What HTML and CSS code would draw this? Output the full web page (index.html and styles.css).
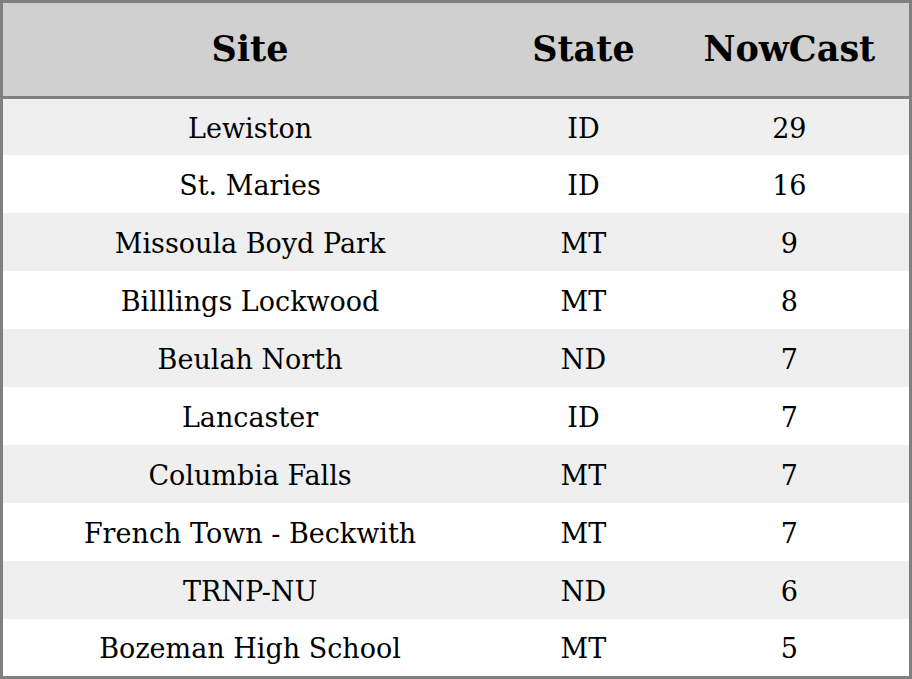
FILE: index.html
```html
<!DOCTYPE html>
<html>
<head>
<meta charset="utf-8">
<link rel="stylesheet" href="styles.css">
</head>
<body>
<table class="tbl">
  <colgroup>
    <col class="c-site">
    <col class="c-state">
    <col class="c-now">
  </colgroup>
  <thead>
    <tr><th>Site</th><th>State</th><th>NowCast</th></tr>
  </thead>
  <tbody>
    <tr><td>Lewiston</td><td>ID</td><td>29</td></tr>
    <tr><td>St. Maries</td><td>ID</td><td>16</td></tr>
    <tr><td>Missoula Boyd Park</td><td>MT</td><td>9</td></tr>
    <tr><td>Billlings Lockwood</td><td>MT</td><td>8</td></tr>
    <tr><td>Beulah North</td><td>ND</td><td>7</td></tr>
    <tr><td>Lancaster</td><td>ID</td><td>7</td></tr>
    <tr><td>Columbia Falls</td><td>MT</td><td>7</td></tr>
    <tr><td>French Town - Beckwith</td><td>MT</td><td>7</td></tr>
    <tr><td>TRNP-NU</td><td>ND</td><td>6</td></tr>
    <tr><td>Bozeman High School</td><td>MT</td><td>5</td></tr>
  </tbody>
</table>
</body>
</html>
```
FILE: styles.css
```css
html, body {
  margin: 0;
  padding: 0;
  background: #ffffff;
}
.tbl {
  width: 912px;
  height: 679px;
  border-collapse: collapse;
  border: 3px solid #808080;
  table-layout: fixed;
  font-family: "DejaVu Serif", serif;
  color: #000;
}
.c-site { width: 494px; }
.c-state { width: 172px; }
.c-now { width: 240px; }
.tbl th {
  height: 90px;
  background: #d0d0d0;
  font-size: 35px;
  font-weight: bold;
  text-align: center;
  padding: 0 0 3px 0;
  border-bottom: 3px solid #808080;
}
.tbl td {
  height: 56px;
  font-size: 27px;
  line-height: 1;
  text-align: center;
  padding: 2px 0 0 0;
}
.tbl tbody tr:first-child td {
  height: 54px;
}
.tbl tbody tr:last-child td {
  height: 55px;
}
.tbl tbody tr:nth-child(odd) td {
  background: #efefef;
}
```
